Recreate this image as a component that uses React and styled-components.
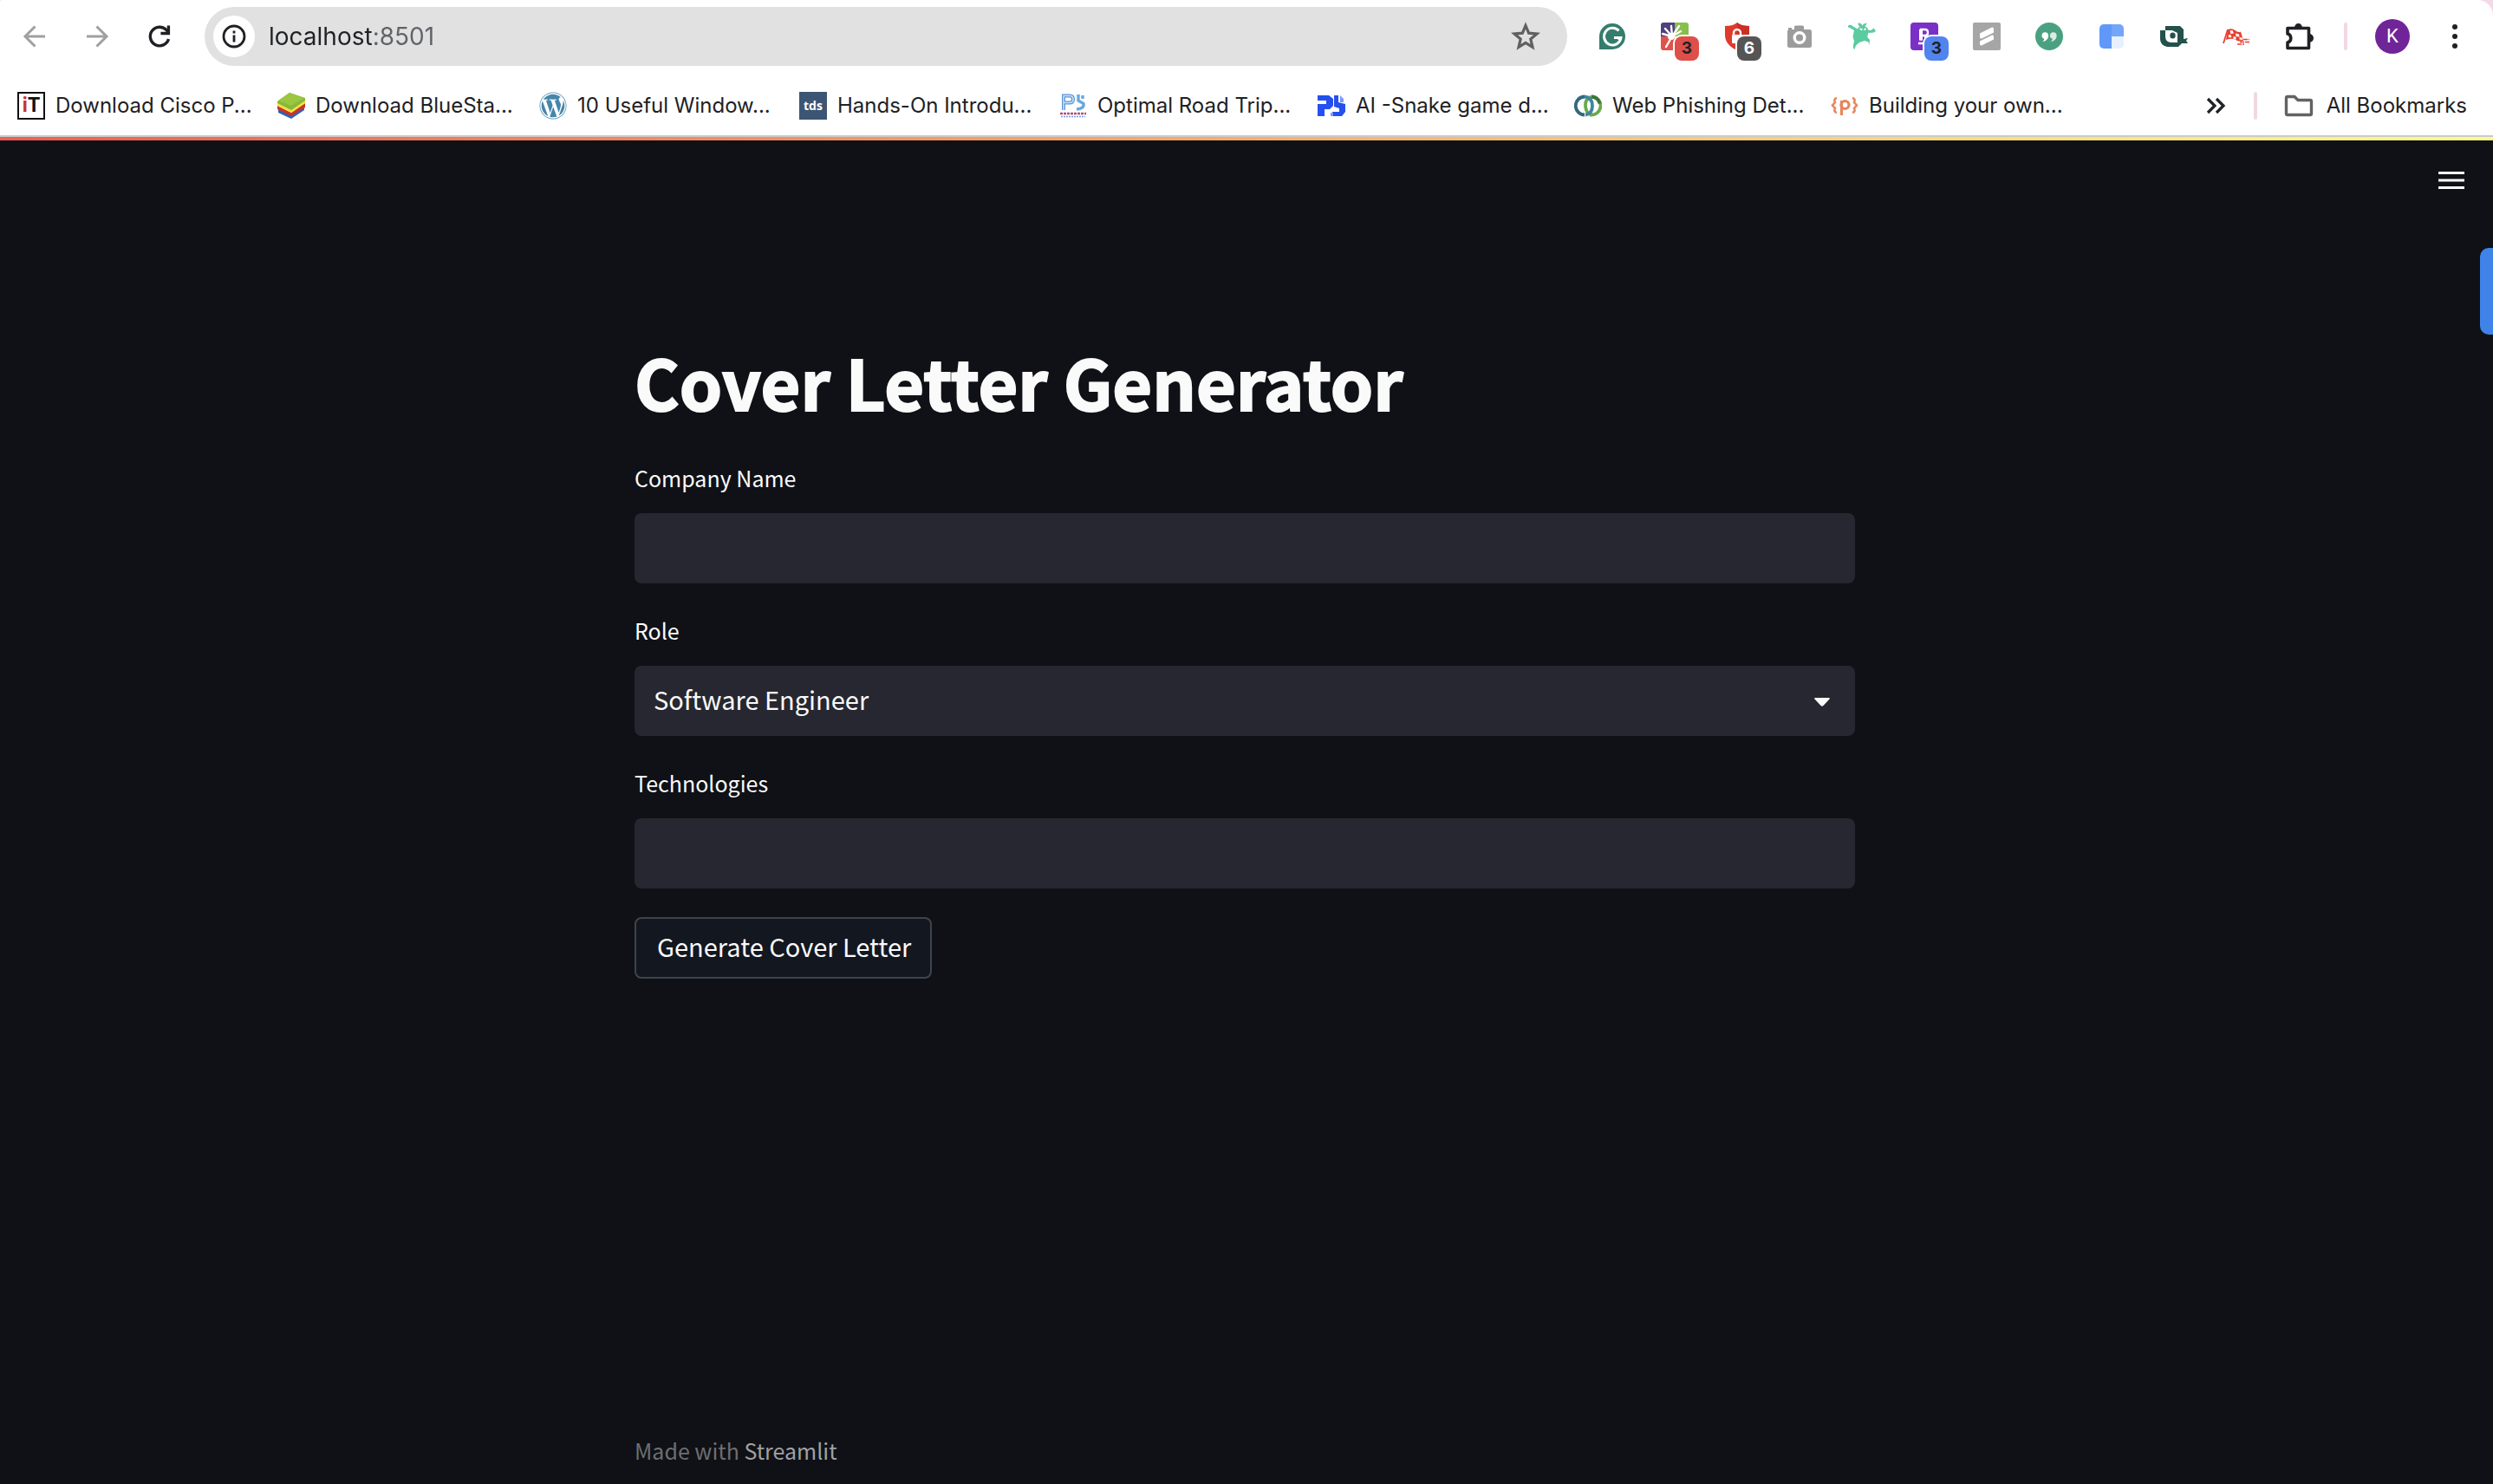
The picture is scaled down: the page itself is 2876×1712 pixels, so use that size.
import React, { useState } from "react";
import styled, { createGlobalStyle } from "styled-components";
import { FaWordpress } from "react-icons/fa";

const UI = `Inter, "Liberation Sans", sans-serif`;
const BODY = `"Noto Sans CJK SC", "Noto Sans CJK JP", "Noto Sans", sans-serif`;

const Global = createGlobalStyle`
  *, *::before, *::after { box-sizing: border-box; }
  body { margin: 0; background: #0f1116; }
  button, input, select { font: inherit; color: inherit; }
`;

const Window = styled.div`
  position: relative;
  min-height: 100vh;
  display: flex;
  flex-direction: column;
  background: #f3d9e6;
`;

const Chrome = styled.header`
  background: #fff;
  border-radius: 2px 18px 0 0;
  border-bottom: 2px solid #c9cbcb;
  font-family: ${UI};
  color: #202124;
`;

const Toolbar = styled.div`
  display: flex;
  align-items: center;
  height: 84px;
  padding: 0 8px 0 4px;
`;

const ToolButton = styled.button`
  position: relative;
  flex: none;
  display: grid;
  place-items: center;
  width: 72px;
  height: 72px;
  padding: 0;
  border: 0;
  background: none;
  color: ${(p) => p.$color || "#202124"};
  cursor: pointer;
`;

const AddressBar = styled.div`
  flex: 1;
  display: flex;
  align-items: center;
  gap: 16px;
  height: 68px;
  margin: 0 16px;
  padding: 0 12px 0 10px;
  border-radius: 34px;
  background: #e1e1e1;
`;

const SiteInfo = styled.button`
  display: grid;
  place-items: center;
  width: 48px;
  height: 48px;
  padding: 0;
  border: 0;
  border-radius: 50%;
  background: #fff;
`;

const Address = styled.input`
  flex: 1;
  min-width: 0;
  height: 48px;
  padding: 0;
  border: 0;
  outline: 0;
  font-size: 28px;
  color: #202124;
  background: linear-gradient(90deg, #202124 0 121px, #5f6368 121px);
  background-clip: text;
  -webkit-background-clip: text;
  -webkit-text-fill-color: transparent;
`;

const Badge = styled.span`
  position: absolute;
  left: 36px;
  top: 36px;
  width: 28px;
  height: 28px;
  border-radius: 8px;
  box-shadow: 0 0 0 2px #fff;
  background: ${(p) => p.$bg};
  color: ${(p) => p.$fg};
  font-size: 19px;
  font-weight: 700;
  line-height: 28px;
  text-align: center;
`;

const Divider = styled.span`
  flex: none;
  width: 4px;
  height: 32px;
  margin: 0 ${(p) => p.$right}px 0 16px;
  border-radius: 2px;
  background: #f1d7e4;
`;

const Avatar = styled.button`
  flex: none;
  width: 40px;
  height: 40px;
  margin-right: 16px;
  padding: 0;
  border: 0;
  border-radius: 50%;
  background: #6f2597;
  color: #fff;
  font-family: Roboto, sans-serif;
  font-size: 22px;
  line-height: 40px;
`;

const BookmarkBar = styled.nav`
  display: flex;
  align-items: center;
  height: 72px;
  padding: 4px 30px 0 20px;
  font-size: 24px;
`;

const Bookmark = styled.a`
  flex: 0 0 ${(p) => p.$width}px;
  display: flex;
  align-items: center;
  gap: 12px;
  color: #202124;
  text-decoration: none;
  white-space: nowrap;
`;

const BookmarkText = styled.span`
  padding-bottom: 2px;
`;

const Spacer = styled.span`
  flex: 1;
`;

const AllBookmarks = styled.button`
  display: flex;
  align-items: center;
  gap: 14px;
  padding: 0;
  border: 0;
  background: none;
  white-space: nowrap;
`;

const MoreButton = styled.button`
  display: grid;
  padding: 0 16px 0 0;
  border: 0;
  background: none;
`;

const Tile = styled.span`
  flex: none;
  display: grid;
  place-items: center;
  width: 32px;
  height: 32px;
  background: ${(p) => p.$bg || "#fff"};
  color: #fff;
  font: 700 14px/28px "Open Sans", sans-serif;
`;

const Page = styled.div`
  flex: 1;
  display: flex;
  flex-direction: column;
  background: #0f1116;
  color: #fafafa;
  font-family: ${BODY};
  font-size: 25px;
`;

const Decoration = styled.div`
  height: 4px;
  background: linear-gradient(90deg, #ee5d53, #fdfc8a);
`;

const PageHeader = styled.div`
  display: flex;
  justify-content: flex-end;
  align-items: center;
  height: 92px;
  padding-right: 18px;
`;

const MenuButton = styled.button`
  display: grid;
  place-items: center;
  width: 60px;
  height: 60px;
  padding: 0;
  border: 0;
  background: none;
`;

const Column = styled.div`
  width: 100%;
  max-width: 1412px;
  margin: 0 auto;
  padding-right: 4px;
`;

const Main = styled(Column).attrs({ as: "main" })`
  flex: 1;
  padding-top: 138px;
`;

const Title = styled.h1`
  margin: 0 0 42px;
  font-size: 79px;
  font-weight: 700;
  line-height: 96px;
  -webkit-text-stroke: 2px #fafafa;
`;

const Form = styled.form`
  display: flex;
  flex-direction: column;
  align-items: flex-start;
  gap: 33px;
`;

const Fields = styled.div`
  display: flex;
  flex-direction: column;
  gap: 33px;
  width: 100%;
`;

const Field = styled.div`
  display: flex;
  flex-direction: column;
  gap: 20px;
`;

const Label = styled.label`
  line-height: 42px;
`;

const TextBox = styled.input`
  width: 100%;
  height: 81px;
  padding: 0 22px;
  border: 0;
  border-radius: 8px;
  background: #262730;
  font-size: 29px;
`;

const SelectWrap = styled.div`
  position: relative;
  display: flex;
`;

const Select = styled.select`
  appearance: none;
  width: 100%;
  height: 81px;
  padding: 0 64px 6px 22px;
  border: 0;
  border-radius: 8px;
  background: #262730;
  font-size: 29px;
`;

const Caret = styled.svg`
  position: absolute;
  right: 29px;
  top: 37px;
  pointer-events: none;
`;

const Submit = styled.button`
  height: 71px;
  padding: 0 22px 6px 24px;
  border: 2px solid #41434a;
  border-radius: 8px;
  background: #131720;
  font-size: 29px;
  line-height: 60px;
`;

const Footer = styled(Column).attrs({ as: "footer" })`
  padding-bottom: 19px;
  color: #6d6e72;
  line-height: 40px;
`;

const FooterLink = styled.a`
  color: #a0a1a3;
  text-decoration: none;
`;

const SideTab = styled.button`
  position: absolute;
  right: 0;
  top: 286px;
  width: 15px;
  height: 100px;
  padding: 0;
  border: 0;
  border-radius: 10px 0 0 10px;
  background: #3f83e8;
`;

const Svg = ({ w = 32, h = 32, box, children, ...rest }) => (
  <svg width={w} height={h} viewBox={box || `0 0 ${w} ${h}`} fill="none" aria-hidden="true" {...rest}>
    {children}
  </svg>
);

const BackIcon = () => (
  <Svg stroke="currentColor" strokeWidth="3">
    <path d="M28 16H6M16.500 4.500L5 16l11.500 11.500" />
  </Svg>
);
const ForwardIcon = () => (
  <Svg stroke="currentColor" strokeWidth="3">
    <path d="M4 16h22M15.500 4.500L27 16 15.500 27.500" />
  </Svg>
);
const ReloadIcon = () => (
  <Svg stroke="currentColor" strokeWidth="3.400">
    <path d="M26.500 19A10.800 10.800 0 1 1 24 8.600l2 2.200" />
    <path d="M26.400 3.500v9h-9" />
  </Svg>
);
const InfoIcon = () => (
  <Svg w={28} h={28} stroke="currentColor" strokeWidth="2.800">
    <circle cx="14" cy="14" r="12" />
    <path d="M14 12.500v8M14 7.500v3" />
  </Svg>
);
const StarIcon = () => (
  <Svg w={34} h={34} stroke="currentColor" strokeWidth="3.200" strokeLinejoin="miter">
    <path d="M17 4.500l3.600 8.700 9.400.8-7.200 6.100 2.200 9.200-8-4.900-8 4.900 2.200-9.200L4 14l9.400-.8z" />
  </Svg>
);

const GrammarIcon = () => (
  <Svg>
    <path d="M16 1a15 15 0 0 1 0 30H1V16A15 15 0 0 1 16 1z" fill="#347d6c" />
    <path d="M23.500 9.500A9.800 9.800 0 1 0 26 17.500h-8M23 20l2.500-2.500" stroke="#fff" strokeWidth="3" />
  </Svg>
);
const BurstIcon = () => (
  <Svg>
    <path d="M3 0h13v16H0V3a3 3 0 0 1 3-3z" fill="#50407f" />
    <path d="M16 0h13a3 3 0 0 1 3 3v13H16z" fill="#86bf4d" />
    <path d="M0 16h16v16H3a3 3 0 0 1-3-3z" fill="#e0524a" />
    <path d="M13 16L2 13M13 16L5 7M13 16L12 4M13 16l8-12M13 16l10-6M13 16L6 28" stroke="#fff" strokeWidth="2.400" strokeLinecap="round" />
    <circle cx="12" cy="16" r="4" fill="#fff" />
  </Svg>
);
const ShieldIcon = () => (
  <Svg>
    <path d="M16 0c4 3 8 4 14 4v10c0 8-5 14-14 18C7 28 2 22 2 14V4c6 0 10-1 14-4z" fill="#e03a2d" />
    <path d="M16 0c4 3 8 4 14 4v10c0 8-5 14-14 18z" fill="#c93026" />
    <rect x="10" y="14" width="12" height="10" rx="1" fill="#fff" />
    <path d="M12 15v-3a4 4 0 0 1 8 0v3" stroke="#fff" strokeWidth="2.400" />
  </Svg>
);
const CameraIcon = () => (
  <Svg>
    <path d="M3 6h4v2h3V5q0-1.500 1.500-1.500h8Q21 3.500 21 5v3h6.500Q30 8 30 10.500v16q0 2.500-2.500 2.500h-23Q2 29 2 26.500v-16Q2 9 3 8.500z" fill="#9c9c9c" />
    <circle cx="16" cy="17.500" r="5.800" stroke="#fff" strokeWidth="3.400" />
  </Svg>
);
const FigureIcon = () => (
  <Svg>
    <path d="M0 3.500Q3 2 5 4l6 3.500Q12 5 13.500 4.500 11 2.500 11.500.500 15 0 16.500 3.500 18 .500 22 .800 20.500 3 19.500 4.500q3.500 1 3.500 4l3.500.500 3-2.500 2.500 3-2 2-7 .5q0 3-1 4.500l3 3.500-.500 6-1-3.500-4.500-1.500-6 2-4 3.500-1.500 4.500q-2-1-1.500-5l1-4.500-1.500-5 1.500-7.500-6-3.500Q.500 8 0 3.500z" fill="#5bcba0" />
    <path d="M13.500 7l3 1.500M20.500 7l-2 1.500" stroke="#fff" strokeWidth="1.800" />
  </Svg>
);
const PurpleIcon = () => (
  <Svg>
    <rect width="32" height="32" rx="4" fill="#7a30c6" />
    <path d="M12 20.500V8h5q3 0 3 3.500T17 15h-3M16 15l3 5M9 24h8" stroke="#fff" strokeWidth="2.400" />
    <path d="M12 20.500V8" stroke="#fff" strokeWidth="4" />
  </Svg>
);
const SlashIcon = () => (
  <Svg>
    <rect width="32" height="32" rx="2" fill="#a6a6a6" />
    <path d="M8 12.500L22 5.500q2-.5 2 2v4L10 18.500q-2 .5-2-2zM8 21.500L22 14.500q2-.5 2 2v3L10 26.500q-2 .5-2-2z" fill="#fff" />
  </Svg>
);
const QuoteIcon = () => (
  <Svg>
    <circle cx="16" cy="16" r="16" fill="#4aa182" />
    <path d="M7.500 15a3.800 3.800 0 1 1 7.600 0c0 4-2.600 6.500-6.600 7 1-1.400 1.800-2 1.900-3.300A3.600 3.600 0 0 1 7.500 15z" fill="#fff" />
    <path d="M17 15a3.800 3.800 0 1 1 7.600 0c0 4-2.600 6.500-6.600 7 1-1.400 1.800-2 1.900-3.300A3.600 3.600 0 0 1 17 15z" fill="#dfeae5" />
  </Svg>
);
const BlueIcon = () => (
  <Svg w={28} h={28}>
    <path d="M5 0h9v28H5a5 5 0 0 1-5-5V5a5 5 0 0 1 5-5z" fill="#5f98f8" />
    <path d="M14 0h9a5 5 0 0 1 5 5v9H14z" fill="#73a5f9" />
    <path d="M14 14h14v9a5 5 0 0 1-5 5h-9z" fill="#e7f0fe" />
  </Svg>
);
const TealIcon = () => (
  <Svg fill="#22524b">
    <path d="M6 4h17l4 4v11l5-1-2 3 2 3h-7l-4 4H8q-8-2-8-9V9h6z" />
    <path d="M6 9h8l6 3v11h-7q-7 0-7-7z" fill="#fff" />
    <ellipse cx="14.500" cy="15" rx="3.200" ry="3.600" />
  </Svg>
);
const FlagIcon = () => (
  <Svg>
    <path d="M6 8q5-2 8.500 1t6.500 1.500L24 21q-5 1.500-9-1T4 20z" fill="#e8402f" />
    <path d="M6 8L1 24" stroke="#e8402f" strokeWidth="1.800" />
    <path d="M8.500 9.500l3-.5 1.500 3.500-3.500.5zM15 12.500l4 1 .500 3-4-.5zM6.500 15l2.500-1.500 1.500 3.500-3 .5zM12.500 16l3 .8v3l-3-1zM19.500 17l3 .5.5 2.500-3.500-.5z" fill="#fff" />
    <path d="M24 19.500h7M20 22.500h11M17 25h8" stroke="#e8402f" strokeWidth="1.300" strokeDasharray="5 1" />
  </Svg>
);
const PuzzleIcon = () => (
  <Svg w={38} h={38}>
    <path d="M6 9.500h24.500v23H6v-6.500c5-1 5-9 0-10z" stroke="#202124" strokeWidth="3.600" strokeLinejoin="round" />
    <path d="M14 9a4.500 5 0 0 1 9 0zM31 16a5 5 0 0 1 0 10z" fill="#202124" />
  </Svg>
);
const DotsIcon = () => (
  <Svg fill="currentColor">
    <circle cx="16" cy="5" r="3" />
    <circle cx="16" cy="16" r="3" />
    <circle cx="16" cy="27" r="3" />
  </Svg>
);

const ItTile = styled(Tile)`
  display: flex;
  justify-content: center;
  border: 2px solid #111;
  color: #111;
  font: 700 23px/26px Roboto, sans-serif;
`;
const Red = styled.span`
  color: #c8322f;
`;

const StackIcon = () => (
  <Svg>
    <path d="M1 20l15 6 15-10v5L16 31 1 24z" fill="#2f62b5" />
    <path d="M0 16l16 8 16-11v5L16 28 0 20z" fill="#c9342b" />
    <path d="M0 12l16 8 16-11v4L16 24 0 16z" fill="#f6e03c" />
    <path d="M0 11L14 1l18 6v3L16 21 0 13z" fill="#86b83c" />
    <path d="M1 10L14 1l17 6-15 9z" fill="#9cc63f" />
  </Svg>
);
const RoadIcon = () => (
  <Svg>
    <path d="M5 21V4.500h7q4 0 4 4t-4 4H6" stroke="#5a93d6" strokeWidth="4" />
    <path d="M5 21V4.500h7q4 0 4 4t-4 4H6" stroke="#c4e2f6" strokeWidth="1.600" />
    <path d="M22 3v7l6 3.500q1 6-8 6.500M27 4v4" stroke="#69a8df" strokeWidth="3.400" />
    <path d="M1 25h30" stroke="#b5506f" strokeWidth="2.400" strokeDasharray="3 1" />
    <path d="M2 28.500h28" stroke="#6f9ce6" strokeWidth="1.400" strokeDasharray="2 1" />
  </Svg>
);
const SnakeIcon = () => (
  <Svg>
    <path d="M0 4h13l5 4v8l-4 4H8v8H0V14h10v-4H0z" fill="#2450f0" />
    <path d="M19 4h5v8l8 2v9l-4 5H17v-5h8v-4l-6-2z" fill="#2450f0" />
    <path d="M26 4l4 4v4h-4zM15 24h3v4h-3z" fill="#7c9bf7" />
  </Svg>
);
const RingsIcon = () => (
  <Svg strokeWidth="3.800">
    <path d="M20 5.500a10.500 10.500 0 1 1-2 20.800" stroke="#6aaa4c" />
    <path d="M20 5.500q-8 3-7 11t5 9" stroke="#6aaa4c" />
    <path d="M12 5.500a10.300 10.500 0 1 0 0 21" stroke="#31697f" />
    <path d="M12 5.500q9 1 9 10.500t-8 10.500" stroke="#3f86a0" />
    <path d="M20 5.500q8 1 9.500 8" stroke="#3f7340" />
  </Svg>
);
const CodeIcon = () => (
  <Svg stroke="#e9855c" strokeWidth="3.200">
    <path d="M7 7Q3 8 5 12L2 15.500 5 19q-2 4 2 5M25 7q4 1 2 5l3 3.500-3 3.500q2 4-2 5" strokeWidth="2.600" />
    <path d="M12.500 27V10" />
    <circle cx="16.500" cy="15" r="4.500" />
  </Svg>
);

const ChevronsIcon = () => (
  <Svg w={24} h={24} stroke="#202124" strokeWidth="3.200">
    <path d="M3 4l8 8-8 8M13 4l8 8-8 8" />
  </Svg>
);
const FolderIcon = () => (
  <Svg w={36} h={28} stroke="#636363" strokeWidth="3.400" strokeLinejoin="round">
    <path d="M5 3.500h8l4 4h14a1.500 1.500 0 0 1 1.500 1.500v14a1.500 1.500 0 0 1-1.500 1.500H5A1.500 1.500 0 0 1 3.500 23V5A1.500 1.500 0 0 1 5 3.500z" />
  </Svg>
);
const MenuIcon = () => (
  <Svg w={30} h={20} fill="#fff">
    <path d="M0 0h30v3H0zM0 8.500h30v3H0zM0 17h30v3H0z" />
  </Svg>
);

const extensions = [
  { name: "Grammar", icon: GrammarIcon },
  { name: "Burst", icon: BurstIcon, badge: "3", bg: "#dd4f48", fg: "#202124" },
  { name: "Shield", icon: ShieldIcon, badge: "6", bg: "#555", fg: "#fff" },
  { name: "Camera", icon: CameraIcon },
  { name: "Figure", icon: FigureIcon },
  { name: "Purple", icon: PurpleIcon, badge: "3", bg: "#5284ee", fg: "#202124" },
  { name: "Slash", icon: SlashIcon },
  { name: "Quotes", icon: QuoteIcon },
  { name: "Blue", icon: BlueIcon },
  { name: "Teal", icon: TealIcon },
  { name: "Flag", icon: FlagIcon },
  { name: "Extensions", icon: PuzzleIcon },
];

const bookmarks = [
  { text: "Download Cisco P...", width: 300, icon: <ItTile><Red>i</Red>T</ItTile> },
  { text: "Download BlueSta...", width: 302, icon: <StackIcon /> },
  { text: "10 Useful Window...", width: 300, icon: <FaWordpress size={32} color="#4686ab" /> },
  { text: "Hands-On Introdu...", width: 300, icon: <Tile $bg="#3c5574">tds</Tile> },
  { text: "Optimal Road Trip...", width: 298, icon: <RoadIcon /> },
  { text: "AI -Snake game d...", width: 296, icon: <SnakeIcon /> },
  { text: "Web Phishing Det...", width: 296, icon: <RingsIcon /> },
  { text: "Building your own...", width: 296, icon: <CodeIcon /> },
];

const roles = ["Software Engineer", "Data Scientist", "Product Manager"];

export default function App() {
  const [company, setCompany] = useState("");
  const [role, setRole] = useState(roles[0]);
  const [tech, setTech] = useState("");

  return (
    <Window>
      <Global />
      <Chrome>
        <Toolbar>
          <ToolButton $color="#a0a0a0" aria-label="Back"><BackIcon /></ToolButton>
          <ToolButton $color="#a0a0a0" aria-label="Forward"><ForwardIcon /></ToolButton>
          <ToolButton aria-label="Reload"><ReloadIcon /></ToolButton>
          <AddressBar>
            <SiteInfo aria-label="Site information"><InfoIcon /></SiteInfo>
            <Address aria-label="Address" defaultValue="localhost:8501" />
            <ToolButton $color="#606060" aria-label="Bookmark this tab"><StarIcon /></ToolButton>
          </AddressBar>
          {extensions.map(({ name, icon: Icon, badge, bg, fg }) => (
            <ToolButton key={name} aria-label={name}>
              <Icon />
              {badge && <Badge $bg={bg} $fg={fg}>{badge}</Badge>}
            </ToolButton>
          ))}
          <Divider $right={32} />
          <Avatar>K</Avatar>
          <ToolButton aria-label="Browser menu"><DotsIcon /></ToolButton>
        </Toolbar>
        <BookmarkBar>
          {bookmarks.map((b) => (
            <Bookmark key={b.text} href="#" $width={b.width}>
              {b.icon}
              <BookmarkText>{b.text}</BookmarkText>
            </Bookmark>
          ))}
          <Spacer />
          <MoreButton aria-label="More bookmarks"><ChevronsIcon /></MoreButton>
          <Divider $right={30} />
          <AllBookmarks>
            <FolderIcon />
            <BookmarkText>All Bookmarks</BookmarkText>
          </AllBookmarks>
        </BookmarkBar>
      </Chrome>

      <Page>
        <Decoration />
        <PageHeader>
          <MenuButton aria-label="Menu"><MenuIcon /></MenuButton>
        </PageHeader>
        <Main>
          <Title>Cover Letter Generator</Title>
          <Form onSubmit={(e) => e.preventDefault()}>
            <Fields>
              <Field>
                <Label htmlFor="company">Company Name</Label>
                <TextBox id="company" value={company} onChange={(e) => setCompany(e.target.value)} />
              </Field>
              <Field>
                <Label htmlFor="role">Role</Label>
                <SelectWrap>
                  <Select id="role" value={role} onChange={(e) => setRole(e.target.value)}>
                    {roles.map((r) => <option key={r}>{r}</option>)}
                  </Select>
                  <Caret width="18" height="10" viewBox="0 0 18 10" aria-hidden="true">
                    <path d="M1 0h16q1.500.3.500 1.500l-7 7.500q-1.500 1.500-3 0l-7-7.500Q-.500.300 1 0z" fill="#fafafa" />
                  </Caret>
                </SelectWrap>
              </Field>
              <Field>
                <Label htmlFor="tech">Technologies</Label>
                <TextBox id="tech" value={tech} onChange={(e) => setTech(e.target.value)} />
              </Field>
            </Fields>
            <Submit type="submit">Generate Cover Letter</Submit>
          </Form>
        </Main>
        <Footer>
          Made with <FooterLink href="#">Streamlit</FooterLink>
        </Footer>
      </Page>
      <SideTab aria-label="Open side panel" />
    </Window>
  );
}
